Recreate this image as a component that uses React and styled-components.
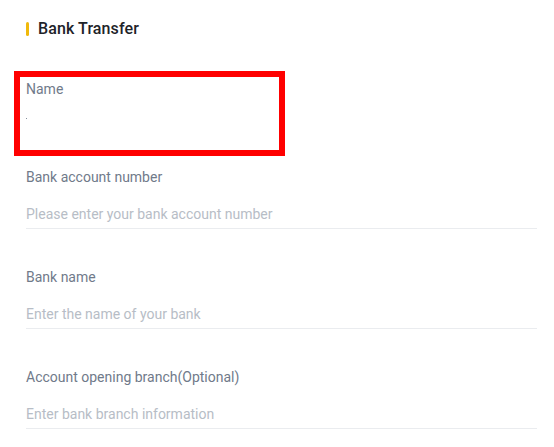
import styled, { createGlobalStyle } from "styled-components";

const GlobalStyle = createGlobalStyle`
  body {
    margin: 0;
    background: #ffffff;
    font-family: Roboto, "Liberation Sans", sans-serif;
  }
`;

const fields = [
  { label: "Bank account number", placeholder: "Please enter your bank account number" },
  { label: "Bank name", placeholder: "Enter the name of your bank" },
  { label: "Account opening branch(Optional)", placeholder: "Enter bank branch information" },
];

const App = () => {
  return (
    <>
      <GlobalStyle />
      <Page>
        <Header>
          <Bar />
          <Title>Bank Transfer</Title>
        </Header>
        <Highlight>
          <Label>Name</Label>
          <Caret />
        </Highlight>
        <Form>
          {fields.map((field) => (
            <Field key={field.label}>
              <Label>{field.label}</Label>
              <Input placeholder={field.placeholder} />
            </Field>
          ))}
        </Form>
      </Page>
    </>
  );
};

const Page = styled.div`
  width: 554px;
  height: 447px;
  box-sizing: border-box;
  padding: 20px 17px 0 26px;
  overflow: hidden;
`;

const Header = styled.div`
  display: flex;
  align-items: center;
  gap: 9px;
  height: 18px;
`;

const Bar = styled.span`
  width: 3px;
  height: 14px;
  border-radius: 2px;
  background-color: #f0b90b;
`;

const Title = styled.h2`
  margin: 0;
  font-size: 16px;
  font-weight: 500;
  line-height: 18px;
  color: #1e2329;
  letter-spacing: 0.1px;
`;

const Highlight = styled.div`
  box-sizing: border-box;
  width: 271px;
  height: 85px;
  margin: 33px 0 0 -12px;
  padding: 2px 6px 0;
  border: 6px solid #ff0000;
`;

const Caret = styled.span`
  display: block;
  width: 1px;
  height: 1px;
  margin-top: 19px;
  background-color: #848e9c;
`;

const Form = styled.div`
  display: flex;
  flex-direction: column;
  gap: 38px;
  margin-top: 11px;
`;

const Field = styled.div`
  display: flex;
  flex-direction: column;
  gap: 13px;
`;

const Label = styled.label`
  font-size: 14px;
  line-height: 20px;
  color: #707a8a;
`;

const Input = styled.input`
  box-sizing: border-box;
  height: 29px;
  padding: 0 0 1px;
  border: none;
  border-bottom: 1px solid #eaecef;
  outline: none;
  font-family: inherit;
  font-size: 14px;
  color: #1e2329;
  background: transparent;

  &::placeholder {
    color: #b7bdc6;
  }
`;

export default App;
